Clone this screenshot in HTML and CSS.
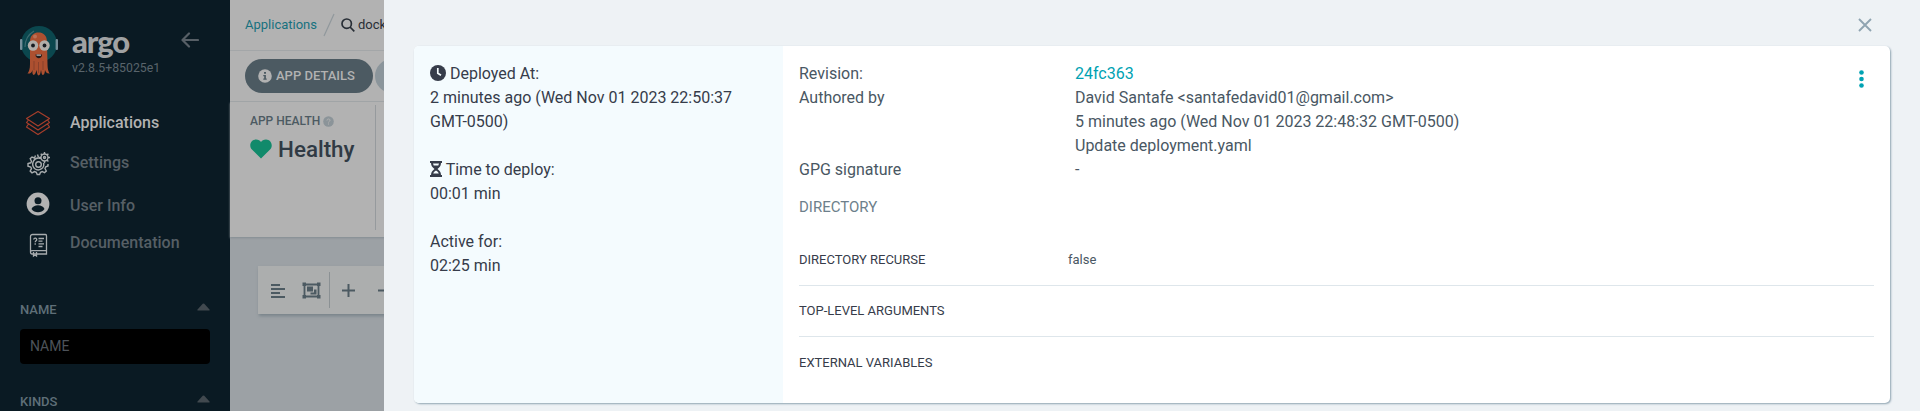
FILE: index.html
```html
<!DOCTYPE html>
<html lang="en">
<head>
<meta charset="utf-8">
<title>Argo CD</title>
<link rel="stylesheet" href="styles.css">
</head>
<body>
<div class="layout">
  <aside class="sidebar">
    <header class="brand">
      <svg class="mascot" width="38" height="51" viewBox="0 0 38 51">
        <circle cx="19" cy="19" r="18" fill="#0b474e"/>
        <path d="M5 22C5 14 9 9 14 6" fill="none" stroke="#3b6a70" stroke-width="1.2"/>
        <rect x="0" y="14" width="2.4" height="11" rx="1" fill="#76909b"/>
        <rect x="35.6" y="14" width="2.4" height="11" rx="1" fill="#76909b"/>
        <path d="M10 17C10 10 14 7.500 18.500 7.500S27 10 27 17L27.500 39C27.500 45 29 48 30 48.500C27 49 25.500 47 25 45C25 48 24 50 22.500 50C21.500 49 21.500 47 21 45C20.500 48 20 50.500 18.500 50.500C17 50 17 47 16.500 45C16 47.500 15 50 13.500 50C12 49 12.500 47 12.500 45C11.500 48 10 49 7.500 48.500C9 47 10 44 10 39Z" fill="#ad5030"/>
        <path d="M14 36v9M18.500 37v11M23 36v9" stroke="#86402b" stroke-width=".9"/>
        <circle cx="15" cy="11.500" r="2" fill="#bb7155"/>
        <circle cx="13" cy="20.500" r="5.200" fill="#b2aeaa"/><circle cx="24.500" cy="20.500" r="5.200" fill="#b2aeaa"/>
        <circle cx="13" cy="20.500" r="1.900" fill="#171c22"/><circle cx="24.500" cy="20.500" r="1.900" fill="#171c22"/>
        <path d="M15.500 29.500h6.500c0 5-6.500 5-6.500 0z" fill="#21191a"/><path d="M16.500 29.500h4.500v1.300h-4.500z" fill="#b2b2b2"/>
      </svg>
      <div class="brand-text">
        <div class="wordmark">argo</div>
        <div class="version">v2.8.5+85025e1</div>
      </div>
      <svg class="back" width="18" height="16" viewBox="0 0 18 16"><path d="M17 8H2M8 1.500L1.500 8L8 14.500" fill="none" stroke="#575f66" stroke-width="2.200" stroke-linecap="round" stroke-linejoin="round"/></svg>
    </header>
    <nav class="nav">
      <a class="nav-item active">
        <svg width="26" height="26" viewBox="0 0 26 26" fill="none" stroke="#a63e2b" stroke-width="1.200" stroke-linejoin="round"><path d="M13 1.500L24.500 8.500L13 16L1.500 8.500Z"/><path d="M3.500 10L1.500 12.500L13 20L24.500 12.500L22.500 10M3.500 14L1.500 17L13 24.500L24.500 17L22.500 14"/></svg>
        <span>Applications</span></a>
      <a class="nav-item settings">
        <svg width="26" height="26" viewBox="0 0 26 26" fill="none" stroke="#a8acae" stroke-width="1.400"><path d="M10.500 5.500L9.500 8L7 7L5.200 8.700L6.500 11.300L5.800 12.800L3 13.500V16.200L5.800 17L6.500 18.600L5.200 21L7 22.800L9.500 21.600L11.300 22.300L12.200 24.500H14.600L15.500 22.300L17.200 21.500L19.500 22.700L21.300 21L20 18.500L20.800 16.800L23 16V14"/><path d="M16 8.500C9 6 5.500 14 9.500 18.500C14 22 20 18 18.500 13"/><circle cx="13.500" cy="14.500" r="2.800"/><circle cx="19.500" cy="7.500" r="3.500"/><circle cx="19.500" cy="7.500" r="1"/><path d="M19.500 2v2M19.500 11v2.300M14 7.500h2M23 7.500h2M15.700 3.700l1.400 1.400M22 10l1.400 1.400M23.400 3.700L22 5.100M12.500 4.500l1 3"/></svg>
        <span>Settings</span></a>
      <a class="nav-item user">
        <svg width="26" height="26" viewBox="0 0 26 26"><circle cx="13" cy="13" r="11.400" fill="#b2b2b2"/><circle cx="13" cy="9.800" r="3.500" fill="#0a1a23"/><path d="M6.500 18c2-5 11-5 13 0c-3 4.300-10 4.300-13 0z" fill="#0a1a23"/></svg>
        <span>User Info</span></a>
      <a class="nav-item docs">
        <svg width="26" height="26" viewBox="0 0 26 26" fill="none" stroke="#a8acae" stroke-width="1.300"><path d="M7.500 2.500H20.500C21.500 2.500 21.500 3 21.500 4V22H7C5 22 5 18.700 7 18.700H21.500M5.500 20V4.500C5.500 3 6.500 2.500 7.500 2.500"/><path d="M13.500 6.500h5.500M13.500 9.200h4M13.500 11.900h5.500M13.500 14.500h4M8.700 7.500c.3-2 3.300-1.500 3 .3c-.2 1-1.500 1-1.500 2.500M10.200 11.200v1.500"/><path d="M8.500 20v4l1.500-1l1.500 1v-4"/></svg>
        <span>Documentation</span></a>
    </nav>
    <section class="filters">
      <div class="filter-head"><span>NAME</span><svg width="13" height="8" viewBox="0 0 13 8"><path d="M.8 7.500Q0 7.500.5 6.500L5.700.8Q6.500 0 7.300.8L12.500 6.500Q13 7.500 12.200 7.500Z" fill="#41494f"/></svg></div>
      <div class="filter-input">NAME</div>
      <div class="filter-head"><span>KINDS</span><svg width="13" height="8" viewBox="0 0 13 8"><path d="M.8 7.500Q0 7.500.5 6.500L5.700.8Q6.500 0 7.300.8L12.500 6.500Q13 7.500 12.200 7.500Z" fill="#41494f"/></svg></div>
    </section>
  </aside>

  <main class="main">
    <div class="crumbs">
      <a class="crumb-link">Applications</a>
      <svg class="slash" width="12" height="24" viewBox="0 0 12 24"><path d="M11 1L1 23" stroke="#90989c" stroke-width="1.200"/></svg>
      <svg width="14" height="14" viewBox="0 0 14 14" fill="none" stroke="#282e36" stroke-width="1.700"><circle cx="5.700" cy="5.700" r="4.700"/><path d="M9 9l4.300 4.300"/></svg>
      <span class="crumb-name">dock</span>
    </div>
    <div class="actions">
      <div class="pill"><svg width="14" height="14" viewBox="0 0 14 14"><circle cx="7" cy="7" r="6.800" fill="#b2b2b2"/><path d="M6 3h2v1.800H6zM5.300 6h2.600v3.600h.8v1.200H5.300V9.600h.9V7.200h-.9z" fill="#4c5a62"/></svg><span>APP DETAILS</span></div>
      <div class="pill next"></div>
    </div>
    <div class="status">
      <div class="health">
        <div class="health-title"><span>APP HEALTH</span><svg width="11" height="11" viewBox="0 0 11 11"><circle cx="5.500" cy="5.500" r="5.300" fill="#8b9499"/><path d="M4 4.500c0-2 3-2 3-.2c0 1.200-1.500 1-1.500 2.200M5.500 7.500v1" fill="none" stroke="#b2b2b2" stroke-width="1"/></svg></div>
        <div class="health-value"><svg width="22" height="20" viewBox="0 0 22 20"><path d="M11 19.500L1.700 10.300C-1.500 6.500 1 .5 6 .5C8.500.5 10 1.700 11 3C12 1.700 13.500.5 16 .5C21 .5 23.500 6.500 20.300 10.300Z" fill="#118a6b"/></svg><span>Healthy</span></div>
      </div>
    </div>
    <div class="graph">
      <div class="toolbar">
        <svg class="t-align" width="15" height="15" viewBox="0 0 15 15" stroke="#4c5a62" stroke-width="2"><path d="M0 2h9M0 6h14M0 10h9M0 14h14"/></svg>
        <svg class="t-group" width="19" height="17" viewBox="0 0 19 17" fill="none" stroke="#4c5a62" stroke-width="1.800"><path d="M2.500 2.500h14v12h-14z"/><path d="M.5.500h3.500v3.500H.5zM15 .5h3.500v3.500H15zM.5 13h3.500v3.500H.5zM15 13h3.500v3.500H15z" fill="#4c5a62" stroke="none"/><path d="M5 4.500h6v5H5zM12 7.500h2.500v5h-6v-2H12z" fill="#4c5a62" stroke="none"/></svg>
        <i class="t-divider"></i>
        <svg class="t-plus" width="13" height="13" viewBox="0 0 13 13" stroke="#4c5a62" stroke-width="2"><path d="M0 6.500h13M6.500 0v13"/></svg>
        <svg width="13" height="13" viewBox="0 0 13 13" stroke="#4c5a62" stroke-width="2"><path d="M0 6.500h13"/></svg>
      </div>
    </div>
  </main>
</div>

<div class="panel">
  <div class="panel-top"><svg width="14" height="14" viewBox="0 0 14 14"><path d="M1 1l12 12M13 1L1 13" stroke="#8fa4b1" stroke-width="1.900"/></svg></div>
  <article class="card">
    <div class="card-left">
      <div class="line"><svg width="16" height="16" viewBox="0 0 16 16"><circle cx="8" cy="8" r="8" fill="#363c4a"/><path d="M7.800 3v5.300l3.200 2" fill="none" stroke="#f4fbfe" stroke-width="1.700"/></svg> Deployed At:</div>
      <div>2 minutes ago (Wed Nov 01 2023 22:50:37 GMT-0500)</div>
      <div class="gap line"><svg width="12" height="16" viewBox="0 0 12 16"><path d="M0 0h12v2h-1c0 3-1.500 4.500-3.500 6c2 1.500 3.500 3 3.500 6h1v2H0v-2h1c0-3 1.500-4.500 3.500-6C2.500 6.500 1 5 1 2H0z" fill="#363c4a"/><path d="M3 2.500h6L8.300 4.500H3.700zM3.200 12.500C4 10.700 5 10 6 9.500C7 10 8 10.700 8.800 12.500z" fill="#f4fbfe"/></svg> Time to deploy:</div>
      <div>00:01 min</div>
      <div class="gap">Active for:</div>
      <div>02:25 min</div>
    </div>
    <div class="card-right">
      <div class="meta-row"><div class="meta">
        <span>Revision:</span><a class="rev">24fc363</a>
        <span>Authored by</span><div>David Santafe &lt;santafedavid01@gmail.com&gt;<br>5 minutes ago (Wed Nov 01 2023 22:48:32 GMT-0500)<br>Update deployment.yaml</div>
        <span>GPG signature</span><span>-</span>
      </div>
      <svg class="kebab" width="5" height="18" viewBox="0 0 5 18" fill="#00a2b3"><circle cx="2.500" cy="2.500" r="2.300"/><circle cx="2.500" cy="9" r="2.300"/><circle cx="2.500" cy="15.500" r="2.300"/></svg></div>
      <div class="dir-title">DIRECTORY</div>
      <div class="params">
        <div class="param"><span>DIRECTORY RECURSE</span><span class="param-value">false</span></div>
        <div class="param"><span>TOP-LEVEL ARGUMENTS</span></div>
        <div class="param"><span>EXTERNAL VARIABLES</span></div>
      </div>
    </div>
  </article>
</div>
</body>
</html>
```
FILE: styles.css
```css
* { box-sizing: border-box; }
body { margin: 0; height: 411px; overflow: hidden; font: 16px/24px Roboto, "Liberation Sans", sans-serif; color: #495763; }
svg { display: block; flex: none; }
.layout { display: flex; height: 411px; }
.sidebar { width: 230px; flex: none; background: #0a1a23; overflow: hidden; }
.brand { display: flex; height: 101px; padding: 25px 0 0 20px; }
.brand-text { margin-left: 14px; width: 109px; }
.wordmark { font: 900 31px/32px Lato, sans-serif; color: #a0a2a3; height: 34px; letter-spacing: -1.1px; }
.version { font-size: 12.3px; line-height: 18px; color: #59646b; white-space: nowrap; }
.back { margin-top: 7px; }
.nav { display: flex; flex-direction: column; padding: 8px 0 0 25px; height: 199px; }
.nav-item { display: flex; align-items: center; gap: 19px; height: 28px; font-weight: 500; color: #565f65; }
.nav-item.active { color: #b2b2b2; }
.settings { margin-top: 12px; }
.user { margin-top: 15px; }
.user svg { margin-top: -5px; }
.docs { margin-top: 9px; }
.docs svg { margin-top: 3px; }
.filters { padding: 0 20px; }
.filter-head { display: flex; justify-content: space-between; height: 20px; line-height: 20px; font-size: 13px; font-weight: 500; color: #5f6f78; }
.filter-head svg { margin-top: 3px; }
.filter-input { height: 35px; margin: 9px 0 28px; padding: 0 10px; border-radius: 4px; background: #000; color: #4d535a; font-size: 14px; line-height: 35px; }

.main { flex: 1; min-width: 0; background: #9ca1a5; }
.crumbs { display: flex; align-items: center; height: 51px; padding-left: 15px; background: #b2b2b2; border-bottom: 1px solid #a3a6a8; font-size: 13px; }
.crumb-link { color: #17717f; width: 71px; }
.slash { margin: 0 6px 0 7px; }
.crumb-name { color: #282e36; margin-left: 3px; }
.actions { display: flex; align-items: center; gap: 2px; height: 51px; padding-left: 15px; background: #b2b2b2; border-bottom: 1px solid #a3a6a8; }
.pill { display: flex; align-items: center; gap: 4px; width: 128px; height: 34px; padding-left: 13px; border-radius: 17px; background: #4c5a62; color: #b2b2b2; font-size: 13px; font-weight: 500; white-space: nowrap; }
.pill.next { background: #8b959b; }
.status { height: 135px; padding-top: 3px; background: #b2b2b2; box-shadow: 0 1px 2px #858d93; }
.health { width: 146px; height: 125px; padding: 6px 0 0 20px; border-right: 1px solid #969a9d; }
.health-title { display: flex; align-items: center; gap: 3px; height: 20px; font-size: 12px; font-weight: 500; color: #4c5a62; }
.health-value { display: flex; align-items: center; gap: 6px; height: 32px; margin-top: 2px; font-size: 22.4px; font-weight: 500; color: #303a44; }
.graph { padding: 29px 0 0 28px; }
.toolbar { display: flex; align-items: center; height: 48px; padding-left: 13px; background: #acaeae; box-shadow: 1px 2px 3px #78838a; }
.t-group { margin: 0 8px 0 16px; }
.t-divider { width: 1px; height: 36px; background: #8b9194; }
.t-plus { margin: 0 23px 0 12px; }

/* Sliding details panel covers the application page. */
.panel { position: absolute; inset: 0 0 0 384px; padding: 0 30px; background: #eef2f5; }
.panel-top { display: flex; justify-content: flex-end; height: 46px; padding: 18px 18px 0 0; }
.card { display: flex; height: 357px; border-radius: 5px; background: #fff; box-shadow: 1px 1px 2px #8fa4b1; overflow: hidden; }
.card-left { width: 369px; flex: none; padding: 16px 20px 0 16px; background: #f4fbfe; color: #363c4a; }
.line svg { display: inline-block; vertical-align: -2px; }
.gap { margin-top: 24px; }
.card-right { flex: 1; padding: 16px 16px 0; }
.meta-row { display: flex; justify-content: space-between; }
.meta { display: grid; grid-template-columns: 276px auto; }
.rev { color: #00a2b3; }
.kebab { margin: 8px 10px 0 0; }
.dir-title { height: 24px; margin-top: 13px; font-size: 15px; color: #6d7f8b; }
.params { margin-top: 16px; }
.param { display: flex; align-items: center; height: 51px; border-bottom: 1px solid #dee6eb; font-size: 13px; color: #363c4a; }
.param:last-child { border-bottom: 0; }
.param span:first-child { width: 269px; }
.param-value { color: #495763; }
```
